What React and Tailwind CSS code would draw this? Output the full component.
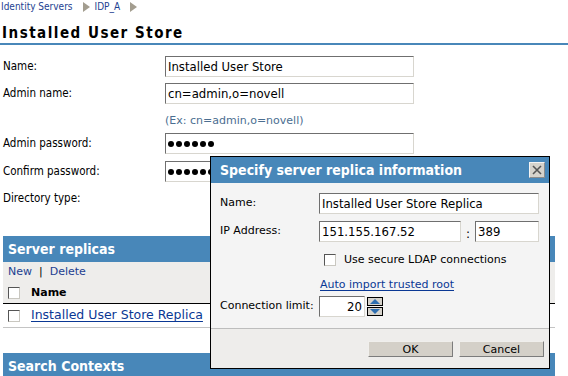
import React from "react";

const inset =
  "border border-t-[#6f6f6f] border-l-[#6f6f6f] border-b-[#d8d6cf] border-r-[#d8d6cf] bg-white";

// two widths of the same face: condensed for fields and labels, regular for hints, links and the dialog
const cond = "font-['DejaVu_Sans_Condensed','DejaVu_Sans',sans-serif]";
const wide = "font-['DejaVu_Sans',sans-serif]";

function TextBox({ value, className = "" }) {
  return (
    <div className={`${inset} ${cond} flex items-center pl-[2px] text-[13px] leading-none text-black ${className}`}>
      {value}
    </div>
  );
}

function Dots({ count }) {
  return (
    <div className="flex items-center gap-[2px] pl-[2px]">
      {Array.from({ length: count }).map((_, i) => (
        <span key={i} className="block w-[6px] h-[6px] rounded-full bg-black" />
      ))}
    </div>
  );
}

function Arrow() {
  return (
    <svg width="7" height="10" viewBox="0 0 7 10" className="ml-[10px] mr-[5px]">
      <polygon points="0,0 7,5 0,10" fill="#a39d8f" />
    </svg>
  );
}

function Check({ className = "" }) {
  return (
    <span className={`block w-[12px] h-[12px] border border-[#555] border-b-[#c9c7c0] border-r-[#c9c7c0] bg-white ${className}`} />
  );
}

function FormRow({ label, children, className = "" }) {
  return (
    <div className={`flex items-center ${className}`}>
      <div className="w-[165px] pl-[3px] text-[11.5px] text-black">{label}</div>
      {children}
    </div>
  );
}

function SectionHeader({ title }) {
  return (
    <div className="mx-[3px] w-[552px] h-[26px] bg-[#4887b9] flex items-center pl-[5px] text-white font-bold text-[14px]">
      {title}
    </div>
  );
}

function Dialog() {
  return (
    <div className="absolute left-[210px] top-[156px] w-[340px] h-[213px] border border-black bg-[#f4f4f4] flex flex-col">
      <div className="h-[26px] bg-[#4887b9] flex items-center justify-between pl-[9px] pr-[4px]">
        <span className="text-white font-bold text-[14px]">Specify server replica information</span>
        <span className="w-[16px] h-[16px] bg-[#d6d3cc] border border-[#f4f4f4] border-b-[#8c8c8c] border-r-[#8c8c8c] flex items-center justify-center">
          <svg width="10" height="10" viewBox="0 0 10 10">
            <path d="M1 1 L9 9 M9 1 L1 9" stroke="#555" strokeWidth="1.6" />
          </svg>
        </span>
      </div>
      <div className={`flex flex-col pt-[10px] text-[11px] ${wide}`}>
        <div className="flex items-center h-[21px]">
          <div className="w-[108px] pl-[9px]">Name:</div>
          <TextBox value="Installed User Store Replica" className="w-[220px] h-[21px]" />
        </div>
        <div className="flex items-center h-[21px] mt-[7px]">
          <div className="w-[108px] pl-[9px]">IP Address:</div>
          <TextBox value="151.155.167.52" className="w-[142px] h-[21px]" />
          <span className="w-[14px] text-center text-[12px] pt-[4px]">:</span>
          <TextBox value="389" className="w-[64px] h-[21px]" />
        </div>
        <div className="flex items-center h-[12px] mt-[12px] pl-[113px]">
          <Check />
          <span className="ml-[8px]">Use secure LDAP connections</span>
        </div>
        <div className="mt-[11px] pl-[109px] h-[14px]">
          <span className="text-[#0a3894] underline underline-offset-[2px]">Auto import trusted root</span>
        </div>
        <div className="flex items-center h-[21px] mt-[5px]">
          <div className="w-[108px] pl-[9px]">Connection limit:</div>
          <div className={`${inset} ${cond} w-[46px] h-[21px] flex items-center justify-end pr-[2px] text-[13px]`}>20</div>
          <div className="ml-[2px] flex flex-col gap-[1px]">
            <span className="w-[16px] h-[9px] bg-[#d6d3cc] border border-black flex items-center justify-center">
              <svg width="10" height="5" viewBox="0 0 10 5"><polygon points="0,5 5,0 10,5" fill="#2f6fb0" /></svg>
            </span>
            <span className="w-[16px] h-[9px] bg-[#d6d3cc] border border-black flex items-center justify-center">
              <svg width="10" height="5" viewBox="0 0 10 5"><polygon points="0,0 10,0 5,5" fill="#2f6fb0" /></svg>
            </span>
          </div>
        </div>
      </div>
      <div className={`mt-[11px] border-t border-[#bdbdbd] flex-1 bg-[#eeedeb] flex justify-end items-start pt-[12px] pr-[5px] gap-[6px] ${wide}`}>
        <button className="w-[85px] h-[16px] bg-[#d4d0c8] border border-[#f0efec] border-b-[#7c7c7c] border-r-[#7c7c7c] text-[11px] leading-none">OK</button>
        <button className="w-[85px] h-[16px] bg-[#d4d0c8] border border-[#f0efec] border-b-[#7c7c7c] border-r-[#7c7c7c] text-[11px] leading-none">Cancel</button>
      </div>
    </div>
  );
}

export default function App() {
  return (
    <div className={`relative w-[568px] h-[376px] overflow-hidden bg-white text-black ${cond}`}>
      <div className="h-[13px] flex items-center pl-[1px] text-[10px] text-[#1d3f91]">
        <span>Identity Servers</span>
        <Arrow />
        <span>IDP_A</span>
        <Arrow />
      </div>
      <div className="h-[30px] flex items-end pb-[2px] pl-[2px] text-[15px] font-bold tracking-[1.5px] leading-none">
        Installed User Store
      </div>
      <div className="h-[2px] bg-[#4887b9]" />

      <div className="pt-[11px] flex flex-col">
        <FormRow label="Name:" className="h-[21px]">
          <TextBox value="Installed User Store" className="w-[249px] h-[21px]" />
        </FormRow>
        <FormRow label="Admin name:" className="h-[21px] mt-[6px]">
          <TextBox value="cn=admin,o=novell" className="w-[249px] h-[21px]" />
        </FormRow>
        <div className={`h-[29px] pl-[165px] pt-[9px] text-[11px] text-[#4b6e91] ${wide}`}>(Ex: cn=admin,o=novell)</div>
        <FormRow label="Admin password:" className="h-[21px]">
          <div className={`${inset} w-[249px] h-[21px] flex items-center`}>
            <Dots count={6} />
          </div>
        </FormRow>
        <FormRow label="Confirm password:" className="h-[21px] mt-[7px]">
          <div className={`${inset} w-[249px] h-[21px] flex items-center`}>
            <Dots count={6} />
          </div>
        </FormRow>
        <FormRow label="Directory type:" className="h-[21px] mt-[6px]" />
      </div>

      <div className="mt-[27px]">
        <SectionHeader title="Server replicas" />
        <div className={`mx-[3px] w-[552px] h-[42px] bg-[#eeedeb] border-b border-black flex flex-col text-[11px] ${wide}`}>
          <div className="h-[21px] flex items-center pl-[5px] text-[#1d3f91]">
            <span>New</span>
            <span className="mx-[7px] text-black">|</span>
            <span>Delete</span>
          </div>
          <div className="h-[20px] flex items-center pl-[5px]">
            <Check />
            <span className="ml-[11px] font-bold">Name</span>
          </div>
        </div>
        <div className={`mx-[3px] w-[552px] h-[24px] border-b border-[#c4c4c4] flex items-center pl-[5px] text-[12.5px] ${wide}`}>
          <Check />
          <span className="ml-[11px] text-[#0a3894] underline underline-offset-[2px]">Installed User Store Replica</span>
        </div>
        <div className="h-[25px]" />
        <SectionHeader title="Search Contexts" />
      </div>

      <Dialog />
    </div>
  );
}
